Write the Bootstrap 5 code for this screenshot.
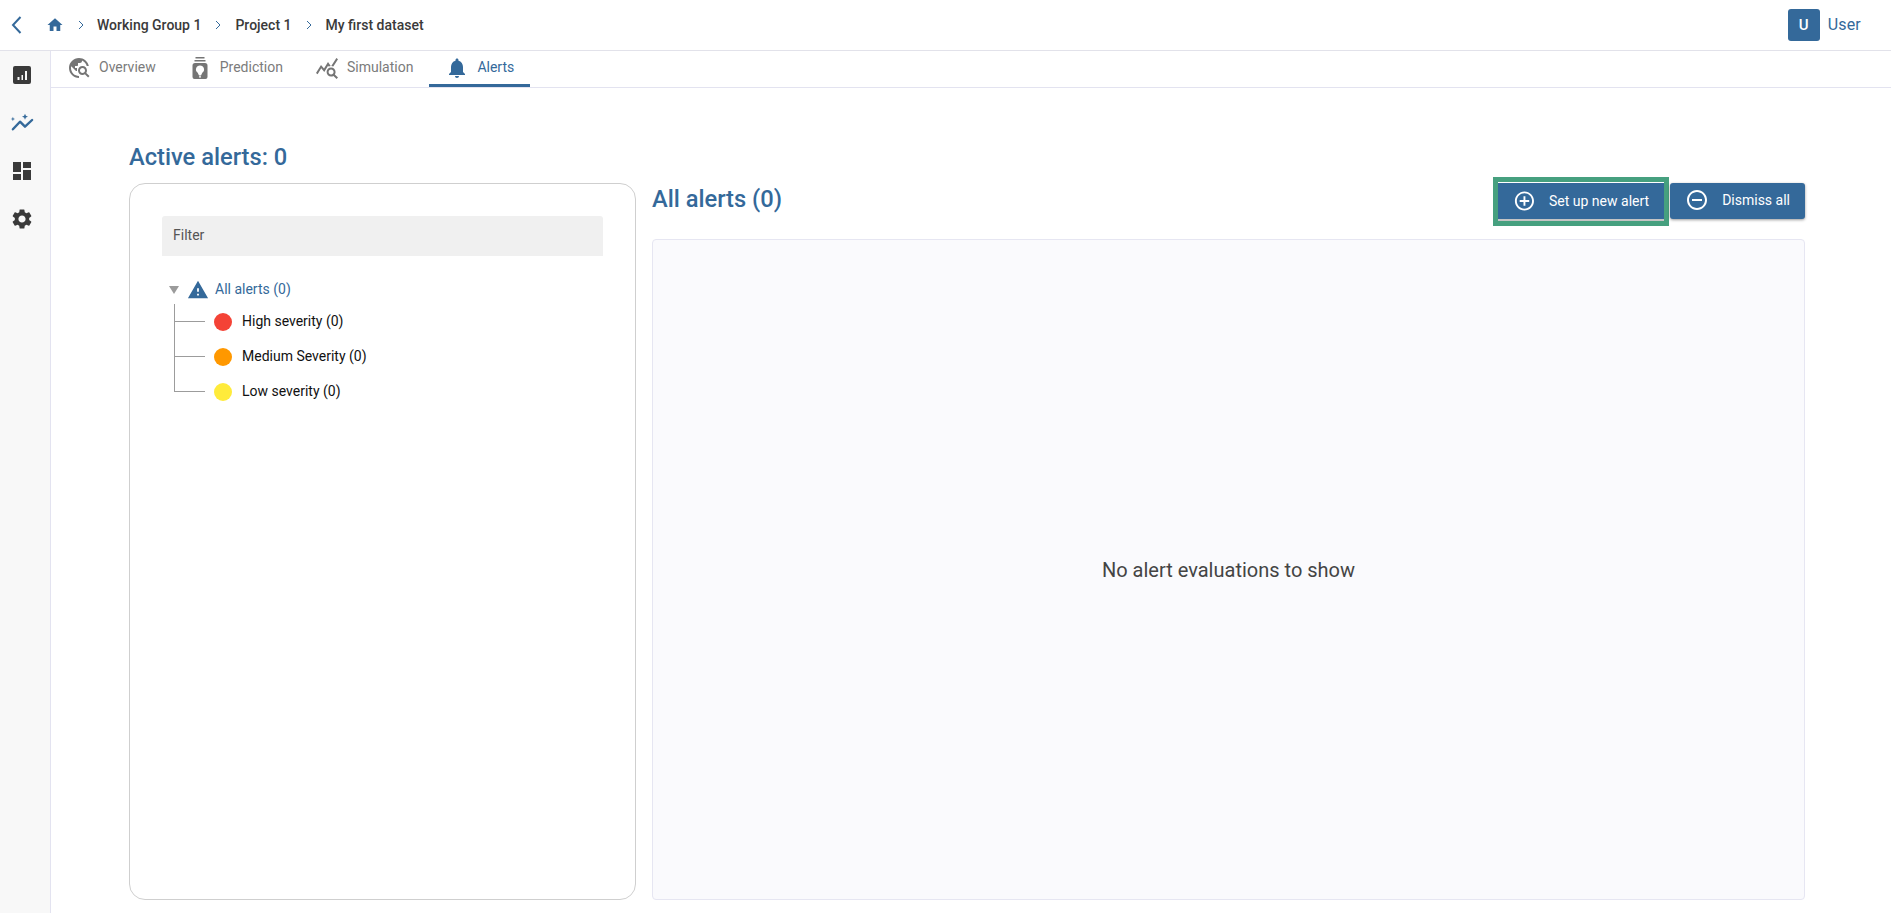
<!DOCTYPE html>
<html lang="en">
<head>
  <meta charset="UTF-8" />
  <title>Alerts</title>
  <link href="https://cdn.jsdelivr.net/npm/bootstrap@5.3.0/dist/css/bootstrap.min.css" rel="stylesheet" />
  <style>
    html, body { height: 100%; }
    body { font-family: Roboto, "Liberation Sans", sans-serif; font-size: 14px; color: #333; overflow: hidden; }
    .app-shell { height: 913px; }
    .top-bar { height: 51px; border-bottom: 1px solid #e2e2ea; padding-left: 8px; padding-right: 30px; }
    .back-link { width: 20px; color: #34699a; }
    .crumbs { margin-left: 18px; font-size: 14px; font-weight: 500; color: #3a3a3a; }
    .crumb-sep { width: 6px; margin: 0 14px 0 14px; color: #34699a; }
    .crumb-sep.first { margin: 0 13px 0 14px; }
    .user-box { width: 32px; height: 32px; background: #34699a; color: #fff; font-weight: 500; font-size: 15px; border-radius: 3px; }
    .user-name { margin-left: 8px; color: #34699a; font-size: 16px; letter-spacing: .2px; }
    .side-rail { width: 51px; flex: none; background: #f8f8f8; border-right: 1px solid #e3e3f0; padding: 12px 7px 0 0; gap: 24px; }
    .rail-icon { width: 24px; height: 24px; fill: #3a3a3a; }
    .tab-row { height: 37px; border-bottom: 1px solid #e3e3f0; }
    .tab-item { height: 36px; padding: 0 16px; color: #7b7b7b; font-size: 14px; gap: 8px; border-bottom: 3px solid transparent; }
    .tab-item svg { width: 24px; height: 24px; fill: #757575; }
    .tab-item.on { color: #34699a; border-bottom-color: #34699a; }
    .tab-item.on svg { fill: #34699a; }
    .page-pane { padding: 55px 86px 13px 78px; min-height: 0; }
    .page-title { font-size: 23.7px; font-weight: 500; color: #34699a; line-height: 28px; margin: 0 0 12px; }
    .filter-card { width: 507px; flex: none; border: 1px solid #cfcfcf; border-radius: 16px; padding: 32px; margin-right: 16px; }
    .filter-box { height: 40px; background: #f0f0f0; color: #555; padding: 0 11px 2px; border-radius: 3px 3px 0 0; font-size: 14px; }
    .tree-top { margin-top: 19px; height: 29px; padding-left: 7px; color: #34699a; }
    .tree-arrow { width: 0; height: 0; border-left: 5px solid transparent; border-right: 5px solid transparent; border-top: 8px solid #9b9b9b; margin-right: 8px; }
    .tree-top svg { width: 22px; height: 22px; fill: #34699a; margin-right: 6px; }
    .tree-list { margin: 0 0 0 12px; padding: 0; list-style: none; }
    .tree-row { height: 35px; color: #111; }
    .tree-link { width: 31px; align-self: stretch; margin-right: 9px; background: linear-gradient(#9c9c9c, #9c9c9c) 0 0 / 1px 100% no-repeat, linear-gradient(#9c9c9c, #9c9c9c) 0 50% / 100% 1px no-repeat; }
    .tree-row:last-child .tree-link { background-size: 1px 50%, 100% 1px; }
    .sev-dot { width: 18px; height: 18px; border-radius: 50%; margin-right: 10px; }
    .sev-high { background: #f44336; }
    .sev-med { background: #ff9800; }
    .sev-low { background: #ffeb3b; }
    .list-head { height: 37px; margin-bottom: 19px; }
    .list-title { font-size: 23.7px; font-weight: 500; color: #34699a; margin: 0; position: relative; top: -2px; }
    .act-btn { height: 36px; background: #34699a; color: #fff; border: 0; border-radius: 3px; font-size: 14px; padding: 0 15px 2px; gap: 13px; white-space: nowrap; box-shadow: 0 1px 3px rgba(0, 0, 0, .4); }
    .act-btn:hover { background: #34699a; color: #fff; }
    .act-btn svg { width: 24px; height: 24px; fill: #fff; }
    .act-btn.marked { width: 166px; height: 39px; margin: -1px 6px 0 0; padding-bottom: 1px; border-radius: 0; outline: 5px solid #46a07f; box-shadow: inset 0 1px #fff, inset 0 -2px #c4c4c4; }
    .empty-panel { background: #fafafd; border: 1px solid #e6e6f2; border-radius: 4px; font-size: 20px; color: #444; }
  </style>
</head>
<body>
<div class="app-shell d-flex flex-column">

  <!-- Top bar -->
  <div class="top-bar d-flex align-items-center flex-none">
    <svg class="back-link" viewBox="0 0 20 24" height="24"><path d="M12.5 4 5 12l7.500 8" fill="none" stroke="currentColor" stroke-width="2"/></svg>
    <div class="crumbs d-flex align-items-center">
      <svg width="18" height="18" viewBox="0 0 24 24" fill="#34699a"><path d="M10 20v-6h4v6h5v-8h3L12 3 2 12h3v8z"/></svg>
      <svg class="crumb-sep first" viewBox="0 0 6 10" height="10"><path d="m1 1 4 4-4 4" fill="none" stroke="currentColor"/></svg>
      <span>Working Group 1</span>
      <svg class="crumb-sep" viewBox="0 0 6 10" height="10"><path d="m1 1 4 4-4 4" fill="none" stroke="currentColor"/></svg>
      <span>Project 1</span>
      <svg class="crumb-sep" viewBox="0 0 6 10" height="10"><path d="m1 1 4 4-4 4" fill="none" stroke="currentColor"/></svg>
      <span>My first dataset</span>
    </div>
    <div class="ms-auto d-flex align-items-center">
      <div class="user-box d-flex align-items-center justify-content-center">U</div>
      <span class="user-name">User</span>
    </div>
  </div>

  <div class="d-flex flex-grow-1" style="min-height:0">
    <!-- Left rail -->
    <div class="side-rail d-flex flex-column align-items-center">
      <svg class="rail-icon" viewBox="0 0 24 24"><path d="M5 3h14a2 2 0 0 1 2 2v14a2 2 0 0 1-2 2H5a2 2 0 0 1-2-2V5a2 2 0 0 1 2-2zm2.500 11v3h2v-3zm4-2v5h1.500v-5zm3.500-4v9h2V8z"/></svg>
      <svg class="rail-icon" viewBox="0 0 24 24"><path d="M2.900 18.300 10 10.700l5 5 7.100-6.700" fill="none" stroke="#34699a" stroke-width="2.400" stroke-linecap="round" stroke-linejoin="round"/><path d="m15 2.700.9 2.100 2.100.9-2.100.9-.9 2.100-.9-2.100-2.100-.9 2.100-.9zM2.900 5.800l.6 1.600 1.600.6-1.600.6-.6 1.600-.6-1.600L.7 8l1.600-.6z" fill="#34699a"/></svg>
      <svg class="rail-icon" viewBox="0 0 24 24"><path d="M3 13h8V3H3v10zm0 8h8v-6H3v6zm10 0h8V11h-8v10zm0-18v6h8V3h-8z"/></svg>
      <svg class="rail-icon" viewBox="0 0 24 24"><path d="M19.140 12.940c.04-.3.060-.61.060-.94 0-.32-.02-.64-.07-.94l2.030-1.580a.49.49 0 0 0 .12-.61l-1.920-3.320a.488.488 0 0 0-.59-.22l-2.390.96c-.5-.38-1.030-.7-1.620-.94l-.36-2.540a.484.484 0 0 0-.48-.41h-3.840c-.24 0-.43.17-.47.41l-.36 2.540c-.59.24-1.130.57-1.620.94l-2.390-.96c-.22-.08-.47 0-.59.22L2.740 8.870c-.12.21-.08.47.12.61l2.030 1.580c-.05.3-.09.63-.09.94s.02.64.07.94l-2.030 1.580a.49.49 0 0 0-.12.61l1.920 3.320c.12.22.37.29.59.22l2.390-.96c.5.38 1.030.7 1.620.94l.36 2.540c.05.24.24.41.48.41h3.840c.24 0 .44-.17.47-.41l.36-2.540c.59-.24 1.130-.56 1.620-.94l2.390.96c.22.08.47 0 .59-.22l1.920-3.320c.12-.22.07-.47-.12-.61l-2.010-1.580zM12 15.600c-1.980 0-3.600-1.620-3.600-3.600s1.620-3.600 3.600-3.600 3.600 1.620 3.600 3.600-1.620 3.600-3.600 3.600z"/></svg>
    </div>

    <div class="d-flex flex-column flex-grow-1" style="min-width:0">
      <!-- Tabs -->
      <div class="tab-row d-flex">
        <div class="tab-item d-flex align-items-center">
          <svg viewBox="0 0 24 24"><path d="M19.300 16.900c.4-.7.7-1.500.7-2.400 0-2.500-2-4.500-4.500-4.500S11 12 11 14.500s2 4.500 4.500 4.500c.9 0 1.700-.3 2.400-.7l3.200 3.200 1.400-1.400-3.200-3.200zm-3.800.1c-1.400 0-2.500-1.100-2.500-2.500s1.100-2.500 2.500-2.500 2.500 1.100 2.500 2.500-1.100 2.500-2.500 2.500zM12 20v2C6.480 22 2 17.520 2 12S6.480 2 12 2c4.840 0 8.870 3.440 9.800 8h-2.070c-.64-2.460-2.400-4.470-4.730-5.410V5c0 1.100-.9 2-2 2h-2v2c0 .55-.45 1-1 1H8v2h2v3H9l-4.790-4.790C4.080 10.790 4 11.380 4 12c0 4.410 3.590 8 8 8z"/></svg>
          Overview
        </div>
        <div class="tab-item d-flex align-items-center">
          <svg viewBox="0 0 24 24"><path d="M7.500 1h9v1.600h-9zM6.500 4h11v1.600h-11zM7 7h10A2.500 2.500 0 0 1 19.500 9.500V21a2 2 0 0 1-2 2h-11a2 2 0 0 1-2-2V9.500A2.500 2.500 0 0 1 7 7zM12 9.500a4 4 0 0 0-2.300 7.300L11 19.500h2l1.300-2.700A4 4 0 0 0 12 9.500zM11 20.300v1.200h2v-1.200z" fill-rule="evenodd"/></svg>
          Prediction
        </div>
        <div class="tab-item d-flex align-items-center">
          <svg viewBox="0 0 24 24"><path d="M19.880 18.470c.44-.7.7-1.510.7-2.390 0-2.490-2.010-4.500-4.500-4.500s-4.500 2.010-4.500 4.500 2.010 4.500 4.490 4.500c.88 0 1.700-.26 2.390-.7L21.580 23 23 21.580l-3.120-3.110zm-3.800.11c-1.380 0-2.500-1.120-2.500-2.500s1.120-2.500 2.500-2.500 2.500 1.120 2.500 2.500-1.120 2.500-2.500 2.500zm-.36-8.500c-.74.020-1.450.18-2.100.45l-.55-.83-3.800 6.180-3.010-3.520-3.630 5.810L1 17l5-8 3 3.500L13 6l2.720 4.080zm2.590.5c-.64-.28-1.330-.45-2.050-.49L21.380 2 23 3.180l-4.690 7.400z"/></svg>
          Simulation
        </div>
        <div class="tab-item on d-flex align-items-center">
          <svg viewBox="0 0 24 24"><path d="M12 22c1.100 0 2-.9 2-2h-4c0 1.100.89 2 2 2zm6-6v-5c0-3.070-1.640-5.640-4.500-6.320V4c0-.83-.67-1.500-1.500-1.500s-1.500.67-1.500 1.500v.68C7.630 5.360 6 7.920 6 11v5l-2 2v1h16v-1l-2-2z"/></svg>
          Alerts
        </div>
      </div>

      <!-- Page -->
      <div class="page-pane d-flex flex-column flex-grow-1">
        <h1 class="page-title">Active alerts: 0</h1>
        <div class="d-flex flex-grow-1" style="min-height:0">
          <div class="filter-card">
            <div class="filter-box d-flex align-items-center">Filter</div>
            <div class="tree-top d-flex align-items-center">
              <span class="tree-arrow"></span>
              <svg viewBox="0 0 24 24"><path d="M1 21h22L12 2 1 21zm12-3h-2v-2h2v2zm0-4h-2v-4h2v4z"/></svg>
              <span>All alerts (0)</span>
            </div>
            <ul class="tree-list">
              <li class="tree-row d-flex align-items-center"><span class="tree-link"></span><span class="sev-dot sev-high"></span>High severity (0)</li>
              <li class="tree-row d-flex align-items-center"><span class="tree-link"></span><span class="sev-dot sev-med"></span>Medium Severity (0)</li>
              <li class="tree-row d-flex align-items-center"><span class="tree-link"></span><span class="sev-dot sev-low"></span>Low severity (0)</li>
            </ul>
          </div>

          <div class="d-flex flex-column flex-grow-1" style="min-width:0">
            <div class="list-head d-flex align-items-start">
              <h2 class="list-title align-self-center">All alerts (0)</h2>
              <div class="ms-auto d-flex align-items-start">
                <button type="button" class="btn act-btn marked d-flex align-items-center">
                  <svg viewBox="0 0 24 24"><path d="M13 7h-2v4H7v2h4v4h2v-4h4v-2h-4V7zm-1-5C6.480 2 2 6.480 2 12s4.480 10 10 10 10-4.480 10-10S17.520 2 12 2zm0 18c-4.410 0-8-3.590-8-8s3.590-8 8-8 8 3.590 8 8-3.590 8-8 8z"/></svg>
                  Set up new alert
                </button>
                <button type="button" class="btn act-btn d-flex align-items-center">
                  <svg viewBox="0 0 24 24"><path d="M7 11v2h10v-2H7zm5-9C6.480 2 2 6.480 2 12s4.480 10 10 10 10-4.480 10-10S17.520 2 12 2zm0 18c-4.410 0-8-3.590-8-8s3.590-8 8-8 8 3.590 8 8-3.590 8-8 8z"/></svg>
                  Dismiss all
                </button>
              </div>
            </div>
            <div class="empty-panel flex-grow-1 d-flex align-items-center justify-content-center">No alert evaluations to show</div>
          </div>
        </div>
      </div>
    </div>
  </div>
</div>
<script src="https://cdn.jsdelivr.net/npm/bootstrap@5.3.0/dist/js/bootstrap.bundle.min.js"></script>
</body>
</html>
